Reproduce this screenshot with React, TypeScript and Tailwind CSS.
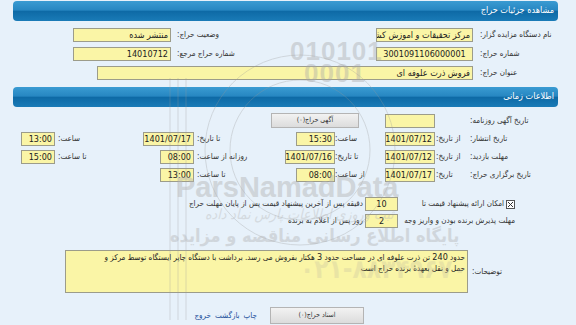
import React from 'react';

const font = { fontFamily: '"DejaVu Sans Condensed", "DejaVu Sans", sans-serif' };

const Box: React.FC<{ className?: string; children?: React.ReactNode }> = ({ className = '', children }) => (
  <div
    className={`h-[14px] shrink-0 overflow-hidden whitespace-nowrap border border-[#9c9c8a] bg-[#faf5a6] px-[2px] text-[9px] leading-[12px] text-[#222] ${className}`}
  >
    {children}
  </div>
);

const Header: React.FC<{ title: string }> = ({ title }) => (
  <div className="h-[20px] rounded-[4px] bg-[linear-gradient(to_bottom,#3a9bd2_0%,#2787c2_45%,#0e6aa6_52%,#1a7bb7_100%)] pr-[4px] pt-[3px] text-[9px] leading-[12px] text-white">
    {title}
  </div>
);

const Label: React.FC<{ className?: string; children?: React.ReactNode }> = ({ className = '', children }) => (
  <div className={`shrink-0 whitespace-nowrap text-left text-[8px] leading-[14px] text-[#333] ${className}`}>{children}</div>
);

export default function App() {
  return (
    <div dir="rtl" style={font} className="relative h-[325px] w-[576px] overflow-hidden bg-[#e7f1fa] pl-[13px] pr-[18px] pt-[1px]">
      <Header title="مشاهده جزئیات حراج" />

      {/* مشخصات حراج */}
      <div className="mt-[7px] flex flex-col gap-[5px]">
        <div className="flex">
          <Label className="w-[78px]">نام دستگاه مزایده گزار:</Label>
          <Box className="mr-[7px] w-[97px] text-right text-[8px]">مرکز تحقیقات و اموزش کشاورزی</Box>
          <Label className="w-[199px]">وضعیت حراج:</Label>
          <Box className="mr-[6px] w-[98px] text-right text-[8px]">منتشر شده</Box>
        </div>
        <div className="flex">
          <Label className="w-[78px]">شماره حراج:</Label>
          <Box className="mr-[7px] w-[97px] text-center">3001091106000001</Box>
          <Label className="w-[199px]">شماره حراج مرجع:</Label>
          <Box className="mr-[6px] w-[98px] text-right">14010712</Box>
        </div>
        <div className="flex">
          <Label className="w-[78px]">عنوان حراج:</Label>
          <Box className="mr-[7px] w-[376px] text-right text-[8px]">فروش ذرت علوفه ای</Box>
        </div>
      </div>

      <div className="mt-[7px]">
        <Header title="اطلاعات زمانی" />
      </div>

      {/* اطلاعات زمانی */}
      <div className="mt-[6px] flex flex-col gap-[4px]">
        <div className="flex items-center">
          <Label className="w-[88px]">تاریخ آگهی روزنامه:</Label>
          <div className="w-[35px] shrink-0" />
          <Box className="w-[50px]" />
          <button className="mr-[26px] h-[15px] w-[88px] border border-[#b4b4b4] bg-[linear-gradient(to_bottom,#f2f2f2,#dcdcdc)] text-[7px] text-[#333]">
            آگهی حراج(۰)
          </button>
        </div>
        <div className="flex">
          <Label className="w-[88px]">تاریخ انتشار:</Label>
          <Label className="w-[35px] pl-[1px]">از تاریخ:</Label>
          <Box className="w-[50px] text-center">1401/07/12</Box>
          <Label className="mr-[1px] w-[49px]">ساعت:</Label>
          <div className="flex w-[55px] shrink-0">
            <Box className="w-[39px] text-right">15:30</Box>
          </div>
          <Label className="w-[83px]">تا تاریخ:</Label>
          <div className="flex w-[54px] shrink-0">
            <Box className="mr-[3px] w-[51px] text-center">1401/07/17</Box>
          </div>
          <Label className="w-[85px]">ساعت:</Label>
          <Box className="mr-[3px] w-[34px] text-right">13:00</Box>
        </div>
        <div className="flex">
          <Label className="w-[88px]">مهلت بازدید:</Label>
          <Label className="w-[35px] pl-[1px]">از تاریخ:</Label>
          <Box className="w-[50px] text-center">1401/07/12</Box>
          <Label className="mr-[1px] w-[49px]">تا تاریخ:</Label>
          <div className="flex w-[55px] shrink-0">
            <Box className="w-[50px] text-center">1401/07/16</Box>
          </div>
          <Label className="w-[83px]">روزانه از ساعت:</Label>
          <div className="flex w-[54px] shrink-0">
            <Box className="mr-[3px] w-[34px] text-right">08:00</Box>
          </div>
          <Label className="w-[85px]">تا ساعت:</Label>
          <Box className="mr-[3px] w-[34px] text-right">15:00</Box>
        </div>
        <div className="flex">
          <Label className="w-[88px]">تاریخ برگزاری حراج:</Label>
          <Label className="w-[35px] pl-[1px]">تاریخ:</Label>
          <Box className="w-[50px] text-center">1401/07/17</Box>
          <Label className="mr-[1px] w-[49px]">از ساعت:</Label>
          <div className="flex w-[55px] shrink-0">
            <Box className="w-[39px] text-right">08:00</Box>
          </div>
          <Label className="w-[83px]">تا ساعت:</Label>
          <div className="flex w-[54px] shrink-0">
            <Box className="mr-[3px] w-[34px] text-right">13:00</Box>
          </div>
        </div>
      </div>

      {/* شرایط */}
      <div className="mt-[15px] flex flex-col gap-[3px]">
        <div className="flex items-center">
          <div className="mr-[43px] flex w-[115px] shrink-0 items-center gap-[2px]">
            <svg width="9" height="9" viewBox="0 0 9 9" className="shrink-0">
              <rect x="0.5" y="0.5" width="8" height="8" fill="#fff" stroke="#555" />
              <path d="M2 2L7 7M7 2L2 7" stroke="#333" strokeWidth="1" />
            </svg>
            <span className="whitespace-nowrap text-[8px] text-[#333]">امکان ارائه پیشنهاد قیمت تا</span>
          </div>
          <Box className="mr-[2px] w-[33px] text-center">10</Box>
          <span className="mr-[2px] whitespace-nowrap text-[8px] text-[#333]">دقیقه پس از آخرین پیشنهاد قیمت پس از پایان مهلت حراج</span>
        </div>
        <div className="flex items-center">
          <div className="mr-[43px] w-[115px] shrink-0 whitespace-nowrap text-[8px] text-[#333]">مهلت پذیرش برنده بودن و واریز وجه</div>
          <Box className="mr-[2px] w-[33px] text-center">2</Box>
          <span className="mr-[2px] whitespace-nowrap text-[8px] text-[#333]">روز پس از اعلام به برنده</span>
        </div>
      </div>

      {/* توضیحات */}
      <div className="mt-[22px] flex items-center">
        <Label className="w-[86px]">توضیحات:</Label>
        <div className="mr-[4px] h-[43px] w-[403px] shrink-0 overflow-hidden border border-[#9c9c8a] bg-[#faf5a6] px-[2px] pt-[1px] text-right text-[8px] leading-[11px] text-[#222]">
          <div className="whitespace-nowrap">
            حدود <span className="text-[9px]">240</span> تن ذرت علوفه ای در مساحت حدود <span className="text-[9px]">3</span> هکتار بفروش می رسد. برداشت با دستگاه چاپر ایستگاه توسط مرکز و
          </div>
          <div>حمل و نقل بعهدهٔ برنده حراج است</div>
        </div>
      </div>

      {/* دکمه ها */}
      <div className="mt-[14px] flex items-center">
        <button className="mr-[194px] h-[17px] w-[94px] shrink-0 border border-[#b4b4b4] bg-[linear-gradient(to_bottom,#f2f2f2,#dcdcdc)] text-[7px] text-[#333]">
          اسناد حراج(۰)
        </button>
        <div className="mr-[13px] flex gap-[4px] text-[8px] text-[#23509a]">
          <a href="#">چاپ</a>
          <a href="#">بازگشت</a>
          <a href="#">خروج</a>
        </div>
      </div>

      {/* واترمارک */}
      <div className="pointer-events-none absolute inset-0" dir="ltr">
        <svg width="576" height="325" className="absolute left-0 top-0 opacity-30">
          <circle cx="300" cy="150" r="95" fill="none" stroke="#9a9a9a" strokeWidth="1" />
          <circle cx="300" cy="150" r="70" fill="none" stroke="#9a9a9a" strokeWidth="1" />
          <path d="M170 78 L170 320 M178 78 L178 320 M186 78 L186 320" stroke="#9a9a9a" strokeWidth="1" />
        </svg>
        <div className="absolute left-[290px] top-[40px] text-[26px] font-bold leading-[22px] tracking-[1px] text-[#a8a8a8] opacity-40" style={{ fontFamily: '"Liberation Sans", sans-serif' }}>
          010101
          <br />
          <span className="pl-[14px]">0001</span>
        </div>
        <div className="absolute left-[176px] top-[172px] text-[29px] font-bold leading-[30px] text-[#b4b4b4] opacity-45" style={{ fontFamily: '"Liberation Sans", sans-serif' }}>
          ParsNamadData
        </div>
        <div className="absolute left-[205px] top-[204px] text-[14px] italic text-[#b8b8b8] opacity-40" dir="rtl">
          ثبت وروزی اطلاعات پارس نماد داده
        </div>
        <div className="absolute left-[170px] top-[226px] text-[18px] font-bold leading-[20px] text-[#b0b0b0] opacity-40" dir="rtl">
          پایگاه اطلاع رسانی مناقصه و مزایده
        </div>
        <div className="absolute left-[300px] top-[254px] text-[26px] font-bold leading-[30px] text-[#c4c0a0] opacity-30" dir="rtl">
          ۰۲۱-۸۸۳۴۹۶۷۰
        </div>
      </div>
    </div>
  );
}
